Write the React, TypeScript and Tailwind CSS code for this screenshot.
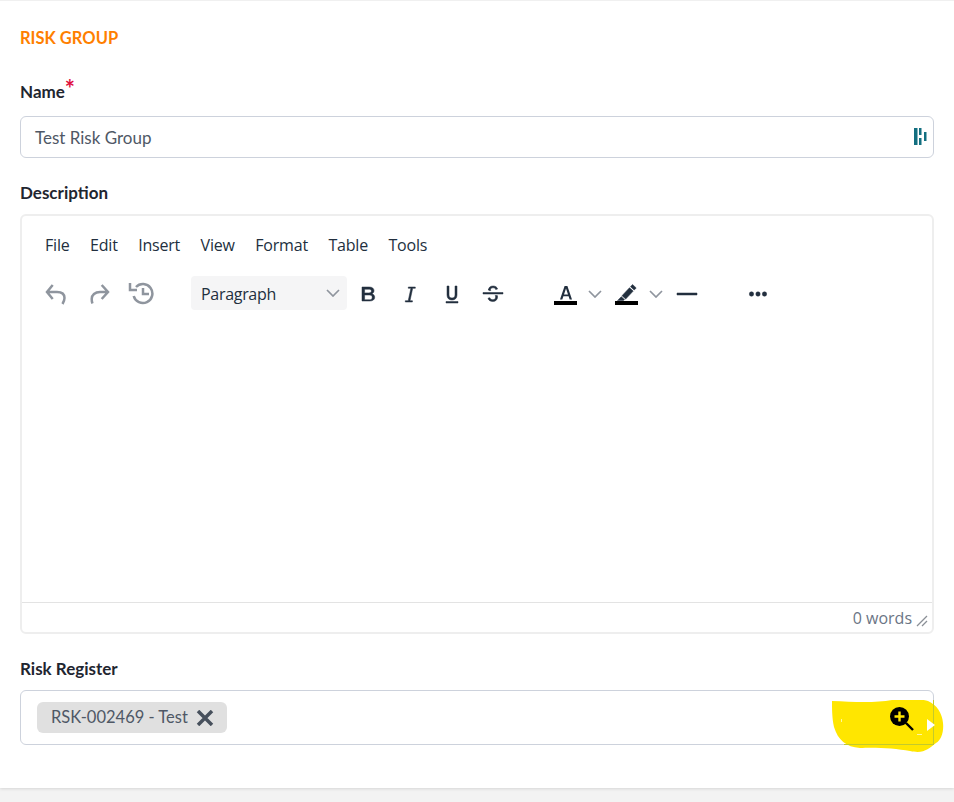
import React from 'react';

const MENU_ITEMS = ['File', 'Edit', 'Insert', 'View', 'Format', 'Table', 'Tools'];

const Chevron = ({ className = '' }: { className?: string }) => (
  <svg width="14" height="8" viewBox="0 0 14 8" fill="none" className={className}>
    <path d="M1 1l6 6 6-6" stroke="#8f959e" strokeWidth="1.7" />
  </svg>
);

const ToolIcon = ({ children, className = '' }: { children: React.ReactNode; className?: string }) => (
  <svg width="24" height="24" viewBox="0 0 24 24" className={`mt-[2px] ${className}`} fill="#222f3e" stroke="#222f3e" strokeWidth="0.5">
    {children}
  </svg>
);

const Label = ({ children }: { children: React.ReactNode }) => (
  <div className="text-[17px] leading-[20px] font-bold text-[#1f2630]">{children}</div>
);

export default function App() {
  return (
    <div className="relative h-[802px] w-[954px] overflow-hidden bg-[#f3f3f3] font-['Lato',sans-serif]">
      <div className="h-[788px] border-t border-[#f0f0f0] bg-white px-5 shadow-[0_1px_3px_rgba(0,0,0,0.12)]">
        <div className="pt-[27px] text-[16.5px] leading-[20px] font-bold text-[#ff7f00]">RISK GROUP</div>

        <div className="mt-[34px] flex h-[20px] items-start">
          <Label>Name</Label>
          <span className="-mt-[3px] text-[24px] leading-[20px] font-bold text-[#e0103f]">*</span>
        </div>
        <div className="mt-[14px] flex h-[42px] w-[914px] items-center justify-between rounded-[6px] border border-[#cdd2dc] pr-[6px] pl-[14px]">
          <span className="pt-[2px] text-[17px] text-[#4f5866]">Test Risk Group</span>
          <svg width="13" height="18" viewBox="0 0 13 18" fill="#136f80">
            <rect x="0" y="0" width="3.5" height="17" />
            <rect x="5" y="0" width="2.5" height="7" />
            <rect x="5" y="10" width="2.5" height="7" />
            <rect x="10" y="4" width="2.5" height="9" />
          </svg>
        </div>

        <div className="mt-[25px]">
          <Label>Description</Label>
        </div>

        <div className="mt-[11px] flex h-[420px] w-[914px] flex-col rounded-[6px] border-2 border-[#eeeeee]">
          <div className="flex-1 font-['Open_Sans',sans-serif] text-[#222f3e]">
            <div className="flex h-[57px] items-start gap-[20.5px] pt-[18px] pl-[23px] text-[16px] leading-[22px] tracking-[-0.2px]">
              {MENU_ITEMS.map(item => (
                <span key={item}>{item}</span>
              ))}
            </div>
            <div className="flex h-[40px] items-center pl-[22px]">
              {/* undo, redo, history */}
              <svg width="24" height="24" viewBox="0 0 24 24" fill="none" stroke="#8f959e" strokeWidth="2.5" className="mt-[2px]">
                <path d="M8.700 3L3 10l5.700 7M3 10h10c5 0 7.500 2.500 7.500 6 0 2-.8 4-2 6" />
              </svg>
              <svg width="24" height="24" viewBox="0 0 24 24" fill="none" stroke="#8f959e" strokeWidth="2.5" className="mt-[2px] ml-[20px]">
                <path d="M13.700 3L20 10l-6.300 7M20 10h-8C7 10 3.700 13 3.700 17c0 2 .3 3.500.8 4.500" />
              </svg>
              <svg width="26" height="26" viewBox="0 0 26 26" fill="none" stroke="#8f959e" strokeWidth="2.500" className="ml-[16px]">
                <path d="M8 7a9.500 9.500 0 1 1-2.300 9" />
                <path d="M2 3v7h7" />
                <path d="M15 8v6h6" />
              </svg>
              <div className="ml-[37px] flex h-[34px] w-[156px] items-center justify-between rounded-[4px] bg-[#f5f5f6] pr-[7px] pl-[10px] text-[16px] tracking-[-0.3px]">
                <span className="pt-[1px]">Paragraph</span>
                <Chevron />
              </div>
              <ToolIcon className="ml-[9px]">
                <path d="M6 5h7.200c3 0 4.800 1.400 4.800 3.700 0 1.400-.8 2.500-2.100 3.100 1.700.5 2.800 1.800 2.800 3.500 0 2.500-2 3.700-5.200 3.700H6V5zm2.600 2.200v3.700h4.300c1.600 0 2.500-.7 2.500-1.900s-.9-1.800-2.500-1.800H8.600zm0 5.800v4.800h4.800c1.800 0 2.800-.8 2.800-2.400s-1-2.400-2.800-2.400H8.600z" />
              </ToolIcon>
              <ToolIcon className="ml-[18px]">
                <path d="M10.300 5h7v1.300h-2.600L12 18.700h2.400V20H7.300v-1.300h2.900l2.700-12.400h-2.600z" />
              </ToolIcon>
              <ToolIcon className="ml-[18px]">
                <path d="M7 4h2v9c0 2 1.100 3 3 3s3-1 3-3V4h2v9c0 3.200-1.900 5-5 5s-5-1.800-5-5V4zM6 19.500h12V21H6z" />
              </ToolIcon>
              <ToolIcon className="ml-[17px]">
                <path d="M2 10.500h20V12H2zM7.500 8c0-2.600 1.900-4 4.600-4 2.300 0 4 1 4.500 3l-1.900.5c-.3-1.100-1.200-1.700-2.600-1.700-1.500 0-2.600.6-2.600 1.800 0 .4.100.7.300 1H7.900c-.3-.5-.4-1-.4-1.600zm8.800 5.500c.2.500.3 1 .3 1.500 0 2.500-2 4.500-4.700 4.500-2.600 0-4.400-1.200-4.900-3.300l1.900-.5c.4 1.300 1.400 2 3 2s2.700-.8 2.700-2.600c0-.6-.1-1.100-.4-1.600h2.100z" />
              </ToolIcon>
              <div className="relative ml-[49px]">
                <ToolIcon>
                  <path stroke="none" d="M10.600 4h2.800L18 17.500h-2.300l-1.100-3.300H9.400l-1.100 3.300H6L10.600 4zM12 6.500L10 12.400h4L12 6.500z" fillRule="evenodd" />
                </ToolIcon>
                <div className="absolute top-[21px] left-0 h-[4px] w-[23px] bg-black" />
              </div>
              <Chevron className="mt-[2px] ml-[10px]" />
              <div className="relative ml-[13px]">
                <ToolIcon>
                  <path d="M17.500 2.500l3.700 3.400-2 2.200-3.700-3.400 2-2.200zM14.500 5.700l3.700 3.400-7.500 8-3.700-3.400 7.500-8zM6.300 14.700l3.200 2.900-1.200 1H2.500l3.800-3.900z" />
                </ToolIcon>
                <div className="absolute top-[21px] left-0 h-[4px] w-[23px] bg-black" />
              </div>
              <Chevron className="mt-[2px] ml-[10px]" />
              <ToolIcon className="ml-[12px]">
                <path d="M2 11h20v2H2z" />
              </ToolIcon>
              <ToolIcon className="ml-[47px]">
                <circle cx="5.500" cy="12" r="2.200" />
                <circle cx="12" cy="12" r="2.200" />
                <circle cx="18.500" cy="12" r="2.200" />
              </ToolIcon>
            </div>
          </div>
          <div className="flex h-[30px] items-center justify-end border-t border-[#e3e3e3] pr-[4px] font-['Open_Sans',sans-serif] text-[16px] text-[#6b7585]">
            <span>0 words</span>
            <svg width="12" height="12" viewBox="0 0 12 12" className="mt-[6px] ml-[4px]" stroke="#8a8f96" strokeWidth="1.3">
              <path d="M1 11L11 1M6 11l5-5" />
            </svg>
          </div>
        </div>

        <div className="mt-[25px]">
          <Label>Risk Register</Label>
        </div>
        <div className="mt-[11px] flex h-[55px] w-[914px] items-center rounded-[6px] border border-[#cdd2dc] pl-[16px]">
          <div className="flex h-[31px] items-center gap-[8px] rounded-[6px] bg-[#e0e0e0] pr-[13px] pl-[14px] text-[16.5px] text-[#4f5866]">
            <span>RSK-002469 - Test</span>
            <svg width="18" height="16" viewBox="0 0 18 16" stroke="#47505c" strokeWidth="3.500">
              <path d="M2 1l14 14M16 1L2 15" />
            </svg>
          </div>
        </div>
      </div>

      {/* marker scribble over the lookup button */}
      <svg width="114" height="54" viewBox="0 0 114 54" className="absolute top-[700px] left-[832px]">
        <path
          fill="#ffe600"
          d="M0 1C22 2 44 3 60 0c14-2 30-1 36 1 9 4 14 12 15 22 1 9-2 17-7 20-8 6-12 11-26 8-15-3-37-4-50-3C14 47 6 40 2 27 0 18 0 8 0 1z"
        />
        <rect x="12" y="44" width="90" height="1" fill="#c3ca2c" />
        <rect x="101" y="0" width="1" height="44" fill="#c3ca2c" />
        <rect x="9" y="19" width="1" height="3" fill="#fff7a0" />
        <rect x="85" y="34" width="5" height="1" fill="#fff7a0" />
      </svg>
      <svg width="26" height="26" viewBox="0 0 26 26" className="absolute top-[706px] left-[889px]">
        <circle cx="10.500" cy="10.500" r="9.500" fill="#000" />
        <path d="M10.500 5.500v10M5.500 10.500h10" stroke="#ffe600" strokeWidth="2.400" />
        <path d="M17 17l7 7" stroke="#000" strokeWidth="2.400" />
      </svg>
      <svg width="10" height="14" viewBox="0 0 10 14" className="absolute top-[718px] left-[926px]">
        <path d="M1 1l8 6-8 6z" fill="#fff" />
      </svg>
    </div>
  );
}
